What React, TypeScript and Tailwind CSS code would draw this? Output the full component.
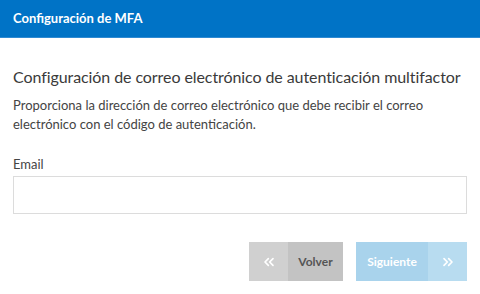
import React from "react";
import { ChevronsLeft, ChevronsRight } from "lucide-react";

export default function App() {
  return (
    <div className="w-[480px] h-[294px] bg-white overflow-hidden" style={{ fontFamily: 'Lato, "Noto Sans", sans-serif' }}>
      <div className="h-[38px] bg-[#0073c6] border-b border-[#2f8ad2] flex items-center px-[13px]">
        <span className="text-white text-[13px] font-bold">Configuración de MFA</span>
      </div>
      <div className="px-[13px]">
        <h1 className="mt-[28px] text-[16px] leading-[22px] text-[#3a3a3a] whitespace-nowrap tracking-[-0.08px]">Configuración de correo electrónico de autenticación multifactor</h1>
        <p className="mt-[8px] text-[13px] leading-[19px] text-[#444]">Proporciona la dirección de correo electrónico que debe recibir el correo electrónico con el código de autenticación.</p>
        <label className="block mt-[21px] text-[13px] leading-[19px] text-[#444]">Email</label>
        <input className="mt-[2px] w-full h-[38px] border border-[#dcdcdc] outline-none" />
        <div className="mt-[28px] flex justify-end gap-[13px]">
          <div className="flex h-[39px]">
            <div className="w-[39px] bg-[#d0d0d0] flex items-center justify-center text-white">
              <ChevronsLeft size={16} strokeWidth={2.5} />
            </div>
            <div className="w-[55px] bg-[#c3c3c3] flex items-center justify-center text-[#555] text-[12px] font-bold">Volver</div>
          </div>
          <div className="flex h-[39px]">
            <div className="w-[72px] bg-[#a9d3ec] flex items-center justify-center text-white text-[12px] font-bold">Siguiente</div>
            <div className="w-[39px] bg-[#b8dcf0] flex items-center justify-center text-white">
              <ChevronsRight size={16} strokeWidth={2.5} />
            </div>
          </div>
        </div>
      </div>
    </div>
  );
}
